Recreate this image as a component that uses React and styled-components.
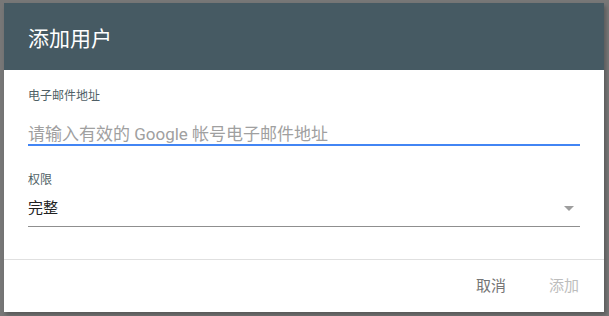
import React from 'react';
import styled, { createGlobalStyle } from 'styled-components';

const GlobalStyle = createGlobalStyle`
  html, body {
    margin: 0;
    padding: 0;
    background: #777777;
  }
  body {
    font-family: Roboto, "Noto Sans CJK SC", sans-serif;
  }
`;

const Backdrop = styled.div`
  width: 609px;
  height: 316px;
  padding: 3px 0 0 4px;
  box-sizing: border-box;
  background: #777777;
`;

const Dialog = styled.div`
  width: 600px;
  height: 309px;
  background: #fff;
  display: flex;
  flex-direction: column;
  box-shadow: 2px 3px 4px rgba(0, 0, 0, 0.25);
`;

const Header = styled.div`
  height: 67px;
  flex-shrink: 0;
  background: #465a63;
  color: #fff;
  font-size: 21px;
  display: flex;
  align-items: center;
  padding: 0 24px;
`;

const Content = styled.div`
  padding: 18px 24px 32px;
  border-bottom: 1px solid #e0e0e0;
`;

const Label = styled.label`
  display: block;
  font-size: 12px;
  line-height: 16px;
  color: #4f5f66;
  margin-top: ${(p) => p.$gap || 0}px;
`;

const Input = styled.input`
  display: block;
  width: 100%;
  box-sizing: border-box;
  border: none;
  border-bottom: 2px solid #4285f4;
  outline: none;
  padding: 20px 0 0;
  height: 42px;
  font-family: inherit;
  font-size: 17px;
  line-height: 20px;
  color: #212121;
  background: transparent;

  &::placeholder {
    color: #a0a0a0;
  }
`;

const Select = styled.div`
  display: flex;
  align-items: center;
  justify-content: space-between;
  padding: 10px 6px 8px 0;
  border-bottom: 1px solid #8f8f8f;
  font-size: 15px;
  line-height: 20px;
  color: #212121;
`;

const Caret = styled.span`
  width: 0;
  height: 0;
  border-left: 5.5px solid transparent;
  border-right: 5.5px solid transparent;
  border-top: 5px solid #9e9e9e;
`;

const Footer = styled.div`
  flex: 1;
  display: flex;
  align-items: center;
  justify-content: flex-end;
  gap: 43px;
  padding: 0 25px 0 0;
`;

const Button = styled.button`
  border: none;
  background: none;
  padding: 0;
  font-family: inherit;
  font-size: 15px;
  line-height: 20px;
  color: ${(p) => (p.$disabled ? '#bdbdbd' : '#757575')};
  cursor: pointer;
`;

export default function App() {
  return (
    <>
      <GlobalStyle />
      <Backdrop>
        <Dialog>
          <Header>添加用户</Header>
          <Content>
            <Label htmlFor="email">电子邮件地址</Label>
            <Input id="email" type="email" placeholder="请输入有效的 Google 帐号电子邮件地址" />
            <Label $gap={26}>权限</Label>
            <Select>
              <span>完整</span>
              <Caret />
            </Select>
          </Content>
          <Footer>
            <Button>取消</Button>
            <Button $disabled>添加</Button>
          </Footer>
        </Dialog>
      </Backdrop>
    </>
  );
}
